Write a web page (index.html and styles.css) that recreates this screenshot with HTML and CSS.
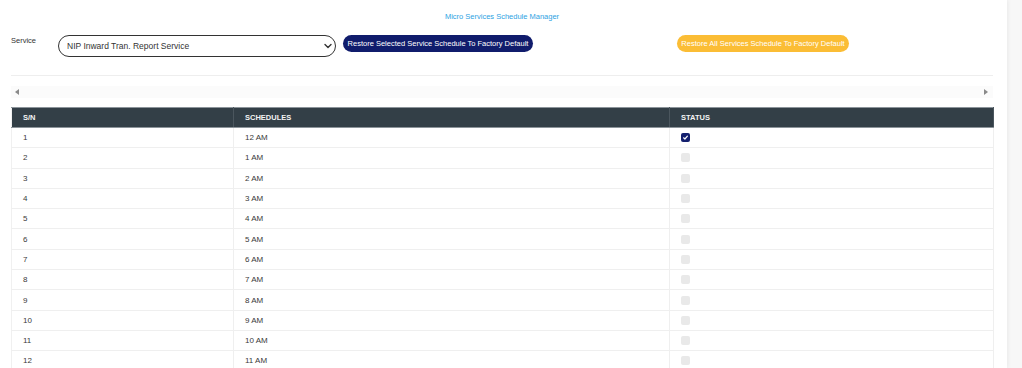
FILE: index.html
```html
<!DOCTYPE html>
<html>
<head>
<meta charset="utf-8">
<link rel="stylesheet" href="styles.css">
</head>
<body>
<div class="card">
  <div class="title">Micro Services Schedule Manager</div>
  <div class="controls">
    <label class="label">Service</label>
    <div class="select">
      <span>NIP Inward Tran. Report Service</span>
      <svg class="chev" width="8" height="6" viewBox="0 0 8 6"><path d="M1 1.5 L4 4.5 L7 1.5" fill="none" stroke="#333" stroke-width="1.4" stroke-linecap="round" stroke-linejoin="round"/></svg>
    </div>
    <button class="btn btn-navy">Restore Selected Service Schedule To Factory Default</button>
    <button class="btn btn-amber">Restore All Services Schedule To Factory Default</button>
  </div>
  <div class="sep"></div>
  <div class="scrollbar">
    <span class="arrow-left"></span>
    <span class="arrow-right"></span>
  </div>
  <table class="grid">
    <thead>
      <tr><th class="c1">S/N</th><th class="c2">SCHEDULES</th><th class="c3">STATUS</th></tr>
    </thead>
    <tbody>
      <tr><td>1</td><td>12 AM</td><td><span class="cb on"><svg width="9" height="9" viewBox="0 0 9 9"><path d="M2.6 4.8 L3.9 6 L6.4 3.2" fill="none" stroke="#fff" stroke-width="1.2" stroke-linecap="round" stroke-linejoin="round"/></svg></span></td></tr>
      <tr><td>2</td><td>1 AM</td><td><span class="cb"></span></td></tr>
      <tr><td>3</td><td>2 AM</td><td><span class="cb"></span></td></tr>
      <tr><td>4</td><td>3 AM</td><td><span class="cb"></span></td></tr>
      <tr><td>5</td><td>4 AM</td><td><span class="cb"></span></td></tr>
      <tr><td>6</td><td>5 AM</td><td><span class="cb"></span></td></tr>
      <tr><td>7</td><td>6 AM</td><td><span class="cb"></span></td></tr>
      <tr><td>8</td><td>7 AM</td><td><span class="cb"></span></td></tr>
      <tr><td>9</td><td>8 AM</td><td><span class="cb"></span></td></tr>
      <tr><td>10</td><td>9 AM</td><td><span class="cb"></span></td></tr>
      <tr><td>11</td><td>10 AM</td><td><span class="cb"></span></td></tr>
      <tr><td>12</td><td>11 AM</td><td><span class="cb"></span></td></tr>
    </tbody>
  </table>
</div>
</body>
</html>
```

FILE: styles.css
```css
html, body {
  margin: 0;
  padding: 0;
  background: #f7f7f7;
  overflow: hidden;
}
body {
  font-family: "Liberation Sans", Arial, sans-serif;
  font-size: 7.5px;
  color: #333;
}
.card {
  width: 1007px;
  height: 368px;
  background: #fff;
  box-shadow: 1px 0 4px rgba(0,0,0,0.06);
  box-sizing: border-box;
  padding: 12px 14px 0 11px;
}
.title {
  text-align: center;
  color: #2ea3e3;
  line-height: 10px;
  height: 10px;
}
.controls {
  display: flex;
  align-items: flex-start;
  margin-top: 13px;
}
.label {
  width: 47px;
  line-height: 10px;
  padding-top: 1px;
  color: #333;
}
.select {
  width: 278px;
  height: 22px;
  box-sizing: border-box;
  border: 1px solid #333;
  border-radius: 11px;
  display: flex;
  align-items: center;
  justify-content: space-between;
  padding: 0 3px 0 8px;
  font-size: 8.5px;
  color: #333;
}
.chev { display: block; }
.btn {
  border: none;
  height: 17px;
  border-radius: 9px;
  color: #fff;
  font-family: "Liberation Sans", Arial, sans-serif;
  font-size: 7.5px;
  padding: 0;
  text-align: center;
}
.btn-navy {
  background: #101c6c;
  width: 190px;
  margin-left: 7px;
}
.btn-amber {
  background: #fbbd35;
  width: 172px;
  margin-left: 144px;
}
.sep {
  height: 1px;
  background: #eeeeee;
  margin-top: 18px;
}
.scrollbar {
  margin-top: 10px;
  height: 12px;
  background: #fbfbfb;
  display: flex;
  align-items: center;
  justify-content: space-between;
  padding: 0 5px 0 4px;
}
.arrow-left {
  width: 0; height: 0;
  border-top: 3px solid transparent;
  border-bottom: 3px solid transparent;
  border-right: 4px solid #8a8a8a;
}
.arrow-right {
  width: 0; height: 0;
  border-top: 3px solid transparent;
  border-bottom: 3px solid transparent;
  border-left: 4px solid #8a8a8a;
}
.grid {
  margin-top: 9px;
  width: 982px;
  border-collapse: collapse;
  table-layout: fixed;
  border-left: 1px solid #f0f0f0;
  border-right: 1px solid #f0f0f0;
}
.c1 { width: 222px; }
.c2 { width: 436px; }
.c3 { width: 324px; }
.grid th {
  background: #333f47;
  color: #f4f4f4;
  font-weight: bold;
  text-align: left;
  height: 20px;
  box-sizing: border-box;
  padding: 0 11px;
  border-top: 1px solid #8c949a;
  border-bottom: 1px solid #8c949a;
  border-right: 1px solid #4b565e;
}
.grid td {
  height: 20.3px;
  box-sizing: border-box;
  padding: 0 11px;
  border-bottom: 1px solid #efefef;
  border-right: 1px solid #efefef;
  color: #3a3a3a;
  font-size: 8px;
  vertical-align: middle;
}
.cb {
  display: block;
  width: 9px;
  height: 9px;
  border-radius: 2px;
  background: #e9e9e9;
}
.cb.on {
  background: #14206e;
}
.cb svg { display: block; }
```
